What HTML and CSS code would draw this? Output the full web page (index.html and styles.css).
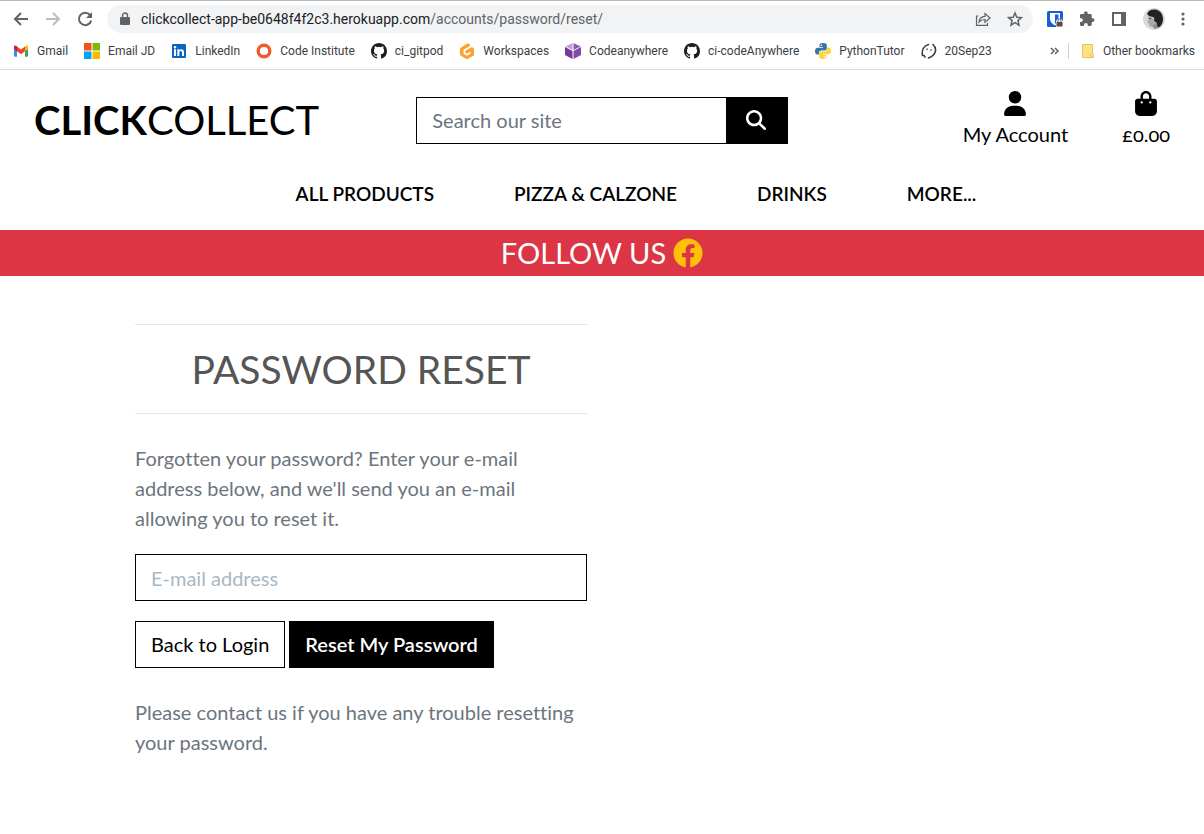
FILE: index.html
```html
<!DOCTYPE html>
<html lang="en">
<head>
<meta charset="utf-8">
<meta name="viewport" content="width=device-width, initial-scale=1">
<title>Password Reset - ClickCollect</title>
<link rel="stylesheet" href="styles.css">
</head>
<body>
<svg class="defs" aria-hidden="true">
  <symbol id="github" viewBox="0 0 16 16"><path fill="#1b1f23" d="M8 0C3.58 0 0 3.58 0 8c0 3.54 2.29 6.53 5.47 7.59.4.07.55-.17.55-.38v-1.49c-2.01.37-2.53-.49-2.69-.94-.09-.23-.48-.94-.82-1.13-.28-.15-.68-.52-.01-.53.63-.01 1.08.58 1.23.82.72 1.21 1.87.87 2.33.66.07-.52.28-.87.51-1.07-1.78-.2-3.64-.89-3.64-3.95 0-.87.31-1.59.82-2.15-.08-.2-.36-1.02.08-2.12 0 0 .67-.21 2.2.82a7.6 7.6 0 0 1 4 0c1.53-1.04 2.2-.82 2.2-.82.44 1.1.16 1.92.08 2.12.51.56.82 1.27.82 2.15 0 3.07-1.87 3.75-3.65 3.95.29.25.54.73.54 1.48v2.19c0 .21.15.46.55.38A8 8 0 0 0 16 8c0-4.42-3.58-8-8-8z"/></symbol>
</svg>

<div class="browser">
  <div class="toolbar">
    <div class="history">
      <button class="tool" aria-label="Back"><svg width="20" height="20" viewBox="0 0 20 20"><path fill="none" stroke="#5f6368" stroke-width="2" d="M17 10H4M10 4l-6 6 6 6"/></svg></button>
      <button class="tool" aria-label="Forward"><svg width="20" height="20" viewBox="0 0 20 20"><path fill="none" stroke="#babcbe" stroke-width="2" d="M3 10h13M10 4l6 6-6 6"/></svg></button>
      <button class="tool" aria-label="Reload"><svg width="20" height="20" viewBox="0 0 20 20"><path fill="none" stroke="#5f6368" stroke-width="2" d="M15 6a6.200 6.200 0 1 0 1.200 5.400"/><path fill="#5f6368" d="M17 3v6h-6z"/></svg></button>
    </div>
    <div class="omnibox">
      <svg width="10" height="14" viewBox="0 0 10 14"><path fill="#5f6368" d="M1 5h8a1 1 0 0 1 1 1v6a1 1 0 0 1-1 1H1a1 1 0 0 1-1-1V6a1 1 0 0 1 1-1z"/><path fill="none" stroke="#5f6368" stroke-width="1.400" d="M2.500 5.500V3.500a2.500 2.500 0 0 1 5 0v2"/></svg>
      <span class="url">clickcollect-app-be0648f4f2c3.herokuapp.com<span class="path">/accounts/password/reset/</span></span>
      <button class="tool" aria-label="Share"><svg width="16" height="16" viewBox="0 0 16 16"><path fill="none" stroke="#5f6368" stroke-width="1.200" d="M3.500 5H1.500v9.400h11V12M4 11c.4-3.400 2.500-5.400 6-5.600V2.600L15 7l-5 4.200V8.500C7.500 8.500 5.500 9.300 4 11z"/></svg></button>
      <button class="tool" aria-label="Bookmark this page"><svg width="16" height="16" viewBox="0 0 16 16"><path fill="none" stroke="#5f6368" stroke-width="1.500" d="M8 2l1.800 4.200 4.600.4-3.500 3 1.100 4.500L8 11.700l-4 2.400 1.100-4.500-3.500-3 4.600-.4z"/></svg></button>
    </div>
    <div class="extensions">
      <button class="tool" aria-label="Password manager"><svg width="16" height="16" viewBox="0 0 16 16"><rect width="16" height="16" rx="1.500" fill="#175ddc"/><path fill="#fff" d="M3 2h10v6c0 3-2.500 5-5 6.500C5.500 13 3 11 3 8z"/><path fill="#175ddc" d="M8 3.500h3.500V8c0 2-1.500 3.500-3.500 4.700z"/><path fill="#fff" d="M9 10.500l1-2 2.500-1 2.500 1 1 2V16H9z"/><rect x="9.500" y="11" width="6" height="4.500" rx=".5" fill="#5a4a44"/><path fill="none" stroke="#5a4a44" d="M11 11V9.700a1.500 1.500 0 0 1 3 0V11"/></svg></button>
      <button class="tool" aria-label="Extensions"><svg width="16" height="16" viewBox="0 0 16 16"><path fill="#5f6368" d="M13.700 7.300h-1V4.500c0-.8-.6-1.400-1.400-1.400H8.700v-1a1.800 1.800 0 0 0-3.600 0v1H2.400C1.600 3.100 1 3.700 1 4.500v2.700h1a1.900 1.900 0 0 1 0 3.800H1v2.600c0 .8.600 1.400 1.400 1.400H5v-1a1.900 1.900 0 0 1 3.800 0v1h2.500c.8 0 1.400-.6 1.400-1.400v-2.700h1a1.800 1.800 0 0 0 0-3.600z"/></svg></button>
      <button class="tool" aria-label="Side panel"><svg width="16" height="16" viewBox="0 0 16 16"><path fill="#5f6368" d="M1 1h14v14H1zM3 3v10h7V3z" fill-rule="evenodd"/></svg></button>
      <button class="tool" aria-label="Profile"><svg width="22" height="22" viewBox="0 0 22 22"><circle cx="11" cy="11" r="11" fill="#d9d9d9"/><path fill="#222" d="M4 6c1-3 4-5 8-4.500 5 .5 8 4.500 8 9.500 0 4-2 8-5 8.500-1.500-1-2-3-1.500-4.500L11 13c0-2 1-3-1-4-2 0-3-1-4-1z"/><path fill="#a9a9a9" d="M5 8c2 .5 4 .500 5 2l1 3 2.500 2 .5 3-3 1-4-.5c-1-.5-.5-1.500-1-2.500L4.500 14 5.500 11z"/><path fill="#444" d="M6 10h2v1H6z"/><path fill="#8b8b8b" d="M10 17l4-1 1 4-4 1z"/></svg></button>
      <button class="tool" aria-label="Menu"><svg width="4" height="16" viewBox="0 0 4 16"><g fill="#5f6368"><circle cx="2" cy="3" r="1.600"/><circle cx="2" cy="8" r="1.600"/><circle cx="2" cy="13" r="1.600"/></g></svg></button>
    </div>
  </div>

  <nav class="bookmarks" aria-label="Bookmarks">
    <a href="#"><svg width="16" height="16" viewBox="0 0 16 16"><path fill="#4285f4" d="M1 3.500l3 2.300v8H2a1 1 0 0 1-1-1z"/><path fill="#34a853" d="M12 5.800l3-2.300v9.300a1 1 0 0 1-1 1h-2z"/><path fill="#fbbc04" d="M12 3.500l1-.7c1-.6 2 .1 2 1.200v2l-3 2.300z"/><path fill="#ea4335" d="M4 8.300V3.600l4 3 4-3v4.700l-4 3z"/><path fill="#c5221f" d="M1 6V4c0-1.100 1-1.800 2-1.200l1 .8v4.700z"/></svg>Gmail</a>
    <a href="#"><svg width="16" height="16" viewBox="0 0 16 16"><path fill="#f25022" d="M0 0h7.500v7.500H0z"/><path fill="#7fba00" d="M8.500 0H16v7.500H8.500z"/><path fill="#00a4ef" d="M0 8.500h7.500V16H0z"/><path fill="#ffb900" d="M8.500 8.500H16V16H8.500z"/></svg>Email JD</a>
    <a href="#"><svg width="16" height="16" viewBox="0 0 16 16"><rect x="1" y="1" width="14" height="14" rx="1" fill="#0a66c2"/><path fill="#fff" d="M3 6.300h2V13H3zM6.300 6.300h2v1c1-1.800 4.700-1.700 4.700 1.700v4h-2V9.500c0-2.200-2.700-2-2.700 0V13h-2z"/><circle cx="4" cy="4.200" r="1.200" fill="#fff"/></svg>LinkedIn</a>
    <a href="#"><svg width="16" height="16" viewBox="0 0 16 16"><circle cx="8" cy="8" r="5.800" fill="none" stroke="#f05a28" stroke-width="3.400"/></svg>Code Institute</a>
    <a href="#"><svg width="16" height="16"><use href="#github"/></svg>ci_gitpod</a>
    <a href="#"><svg width="16" height="16" viewBox="0 0 16 16"><path fill="#ff9f2e" d="M9.500.4a1.700 1.700 0 0 1 .8 3L4.500 6.700v4L8 12.700l3.500-2V8.500l-2.800 1.600a1.600 1.600 0 0 1-1.600-2.800l4.500-2.600C13 3.900 15 4.600 15 6.500v5c0 .7-.3 1-.8 1.300L9 15.700c-.7.400-1.300.4-2 0l-5-2.900c-.6-.3-1-.9-1-1.500V6.100c0-.7.3-1.200 1-1.600L8.300.6c.4-.2.800-.3 1.200-.2z"/></svg>Workspaces</a>
    <a href="#"><svg width="16" height="16" viewBox="0 0 16 16"><path fill="#74389a" d="M0 4l7.500 4v8L0 12z"/><path fill="#8447aa" d="M16 4L8.500 8v8L16 12z"/><path fill="#c49cdb" d="M.5 3.500L7.500 0v7z"/><path fill="#8e5aad" d="M15.500 3.500L8.500 0v7z"/></svg>Codeanywhere</a>
    <a href="#"><svg width="16" height="16"><use href="#github"/></svg>ci-codeAnywhere</a>
    <a href="#"><svg width="16" height="16" viewBox="0 0 16 16"><path fill="#3775a9" d="M8 0C5 0 4.500 1 4.500 2.200V4H8v.7H2.500C.8 4.700 0 6 0 8s.8 3.500 2.200 3.500H4V9.800c0-1.500 1-2.300 2.300-2.300h3.500c1.200 0 2-.8 2-2V2.200C11.800.8 10.500 0 8 0z"/><path fill="#ffd43b" d="M8 16c3 0 3.500-1 3.500-2.200V12H8v-.7h5.500c1.700 0 2.500-1.300 2.500-3.300s-.8-3.500-2.200-3.500H12v1.700c0 1.500-1 2.300-2.300 2.300H6.200c-1.200 0-2 .8-2 2v3.300C4.200 15.200 5.500 16 8 16z"/><circle cx="6.300" cy="2.200" r=".8" fill="#fff"/><circle cx="9.700" cy="13.800" r=".8" fill="#fff"/></svg>PythonTutor</a>
    <a href="#"><svg width="16" height="16" viewBox="0 0 16 16"><path fill="none" stroke="#3a3a3a" stroke-width="1.600" stroke-linecap="round" d="M7.500 1.500C2.500 3 .5 7.500 1.500 12.500M3 12.500l1 1.500M12 1.500c4.500 4 3 11-4.500 13.500"/><path fill="none" stroke="#3a3a3a" stroke-width="1.300" stroke-linecap="round" d="M6 6v.6M10 7v.6"/></svg>20Sep23</a>
    <button class="more" aria-label="More bookmarks"><svg width="10" height="8" viewBox="0 0 10 8"><path fill="none" stroke="#5f6368" stroke-width="1.500" d="M1 1l3 3-3 3M5 1l3 3-3 3"/></svg></button>
    <a class="folder" href="#"><svg width="14" height="16" viewBox="0 0 14 16"><path fill="#fde281" stroke="#e6c35c" d="M1.500 1.500h10v9l1 1v3h-11z"/><path fill="none" stroke="#e6c35c" d="M9.500 14v-2.500l2-1.500"/></svg>Other bookmarks</a>
  </nav>
</div>

<header class="site-header">
  <div class="masthead">
    <a class="logo" href="#"><strong>CLICK</strong>COLLECT</a>
    <form class="search" role="search">
      <input type="text" placeholder="Search our site" aria-label="Search our site">
      <button type="button" aria-label="Search"><svg width="20" height="20" viewBox="0 0 512 512"><path fill="#fff" d="M416 208c0 45.900-14.900 88.300-40 122.700L502.600 457.400c12.500 12.500 12.500 32.800 0 45.300s-32.800 12.500-45.300 0L330.700 376c-34.400 25.200-76.800 40-122.700 40C93.100 416 0 322.900 0 208S93.100 0 208 0S416 93.100 416 208zM208 352a144 144 0 1 0 0-288 144 144 0 1 0 0 288z"/></svg></button>
    </form>
    <div class="account">
      <a href="#"><svg width="22" height="25" viewBox="0 0 448 512"><path d="M224 256A128 128 0 1 0 224 0a128 128 0 1 0 0 256zm-45.700 48C79.800 304 0 383.800 0 482.300C0 498.700 13.300 512 29.700 512H418.300c16.400 0 29.700-13.300 29.700-29.700C448 383.800 368.200 304 269.700 304H178.300z"/></svg>My Account</a>
      <a href="#"><svg width="22" height="25" viewBox="0 0 448 512"><path d="M160 112c0-35.300 28.700-64 64-64s64 28.700 64 64v48H160V112zm-48 48H48c-26.500 0-48 21.500-48 48V416c0 53 43 96 96 96H352c53 0 96-43 96-96V208c0-26.500-21.500-48-48-48H336V112C336 50.100 285.900 0 224 0S112 50.100 112 112v48zm24 48a24 24 0 1 1 0 48 24 24 0 1 1 0-48zm152 24a24 24 0 1 1 48 0 24 24 0 1 1-48 0z"/></svg>£0.00</a>
    </div>
  </div>
  <nav class="main-nav" aria-label="Main">
    <a href="#">ALL PRODUCTS</a>
    <a href="#">PIZZA &amp; CALZONE</a>
    <a href="#">DRINKS</a>
    <a href="#">MORE...</a>
  </nav>
</header>

<div class="banner">
  <span>FOLLOW US</span>
  <a href="#" aria-label="Facebook"><svg width="30" height="30" viewBox="0 0 512 512"><path fill="#ffc107" d="M504 256C504 119 393 8 256 8S8 119 8 256c0 123.780 90.690 226.380 209.250 245V327.690h-63V256h63v-54.640c0-62.150 37-96.480 93.670-96.480 27.140 0 55.520 4.840 55.520 4.840v61h-31.280c-30.800 0-40.410 19.120-40.410 38.730V256h68.780l-11 71.690h-57.780V501C413.310 482.380 504 379.780 504 256z"/></svg></a>
</div>

<main class="content">
  <section class="panel">
    <h1>PASSWORD RESET</h1>
    <p>Forgotten your password? Enter your e-mail address below, and we'll send you an e-mail allowing you to reset it.</p>
    <form class="reset">
      <input type="email" placeholder="E-mail address" aria-label="E-mail address">
      <div class="actions">
        <a class="btn" href="#">Back to Login</a>
        <button class="btn primary" type="button">Reset My Password</button>
      </div>
    </form>
    <p>Please contact us if you have any trouble resetting your password.</p>
  </section>
</main>
</body>
</html>
```
FILE: styles.css
```css
* { box-sizing: border-box; }

body {
  margin: 0;
  background: #fff;
  color: #000;
  font: 400 20px/30px Lato, sans-serif;
  font-variant-ligatures: none;
}

a { color: inherit; text-decoration: none; }
svg { display: block; flex: none; }
button, input { font: inherit; border-radius: 0; }
.defs { position: absolute; width: 0; height: 0; }

/* Browser chrome */
.browser {
  border-top: 1px solid #b9b9bb;
  border-bottom: 1px solid #dadce0;
}

.toolbar {
  display: flex;
  align-items: center;
  gap: 12px;
  padding: 4px 19px 0 11px;
}

.tool, .more {
  display: flex;
  padding: 0;
  border: 0;
  background: none;
}

.history { display: flex; gap: 12px; }

.omnibox {
  display: flex;
  flex: 1;
  align-items: center;
  gap: 16px;
  min-width: 0;
  height: 28px;
  padding: 0 10px 0 13px;
  border-radius: 14px;
  background: #f1f3f4;
}

.omnibox > svg { margin-right: -5px; }

.url {
  flex: 1;
  overflow: hidden;
  color: #202124;
  font: 14px/20px Roboto, sans-serif;
  white-space: nowrap;
}

.path { color: #5f6368; }

.extensions {
  display: flex;
  align-items: center;
  gap: 16px;
  padding-left: 2px;
}

.bookmarks {
  display: flex;
  align-items: center;
  gap: 16px;
  height: 36px;
  padding: 0 9px 0 13px;
  color: #3c4043;
  font: 12px/16px Roboto, sans-serif;
  white-space: nowrap;
}

.bookmarks a { display: flex; align-items: center; gap: 8px; }
.bookmarks .more { margin-left: auto; margin-right: -8px; }
.bookmarks .folder { padding-left: 12px; border-left: 1px solid #cfd1d4; }

/* Site header */
.masthead {
  display: grid;
  grid-template-columns: repeat(3, minmax(0, 1fr));
  align-items: center;
  padding-top: 21px;
}

.logo {
  padding-left: 34px;
  font-size: 40px;
  line-height: 48px;
}

.logo strong { font-weight: 700; }

.search {
  display: flex;
  margin: 0 15px;
  border: 1px solid #000;
}

.search input {
  flex: 1;
  min-width: 0;
  height: 45px;
  padding: 0 15px;
  border: 0;
  background: #fff;
}

.search input::placeholder { color: #6c757d; opacity: 1; }

.search button {
  display: flex;
  align-items: center;
  justify-content: center;
  width: 61px;
  padding: 0;
  border: 0;
  background: #000;
}

.account {
  display: flex;
  justify-content: flex-end;
  gap: 54px;
  padding-right: 34px;
  font-variant-numeric: oldstyle-nums;
}

.account a {
  display: flex;
  flex-direction: column;
  align-items: center;
  gap: 3px;
}

.main-nav {
  display: flex;
  justify-content: center;
  gap: 80px;
  padding: 30px 0 21px 68px;
  font-size: 19px;
  font-weight: 600;
}

.banner {
  display: flex;
  align-items: center;
  justify-content: center;
  gap: 7px;
  height: 46px;
  background: #dc3545;
  color: #fff;
  font-size: 29px;
}

/* Password reset */
.content {
  display: grid;
  grid-template-columns: repeat(2, minmax(0, 1fr));
  column-gap: 30px;
  max-width: 960px;
  margin: 48px auto 0;
  padding: 0 13px;
}

.panel { color: #6c757d; }

.panel h1 {
  margin: 0 0 29px;
  padding: 20px 0;
  border: solid #e5e5e5;
  border-width: 1px 0;
  color: #555;
  font-size: 39px;
  font-weight: 400;
  line-height: 48px;
  text-align: center;
}

.panel p { margin: 0; }

.reset {
  display: grid;
  gap: 20px;
  margin: 21px 0 29px;
}

.reset input {
  width: 100%;
  height: 47px;
  padding: 0 15px;
  border: 1px solid #000;
}

.reset input::placeholder { color: #aab7c4; opacity: 1; }

.actions { display: flex; gap: 4px; }

.btn {
  height: 47px;
  padding: 0 15px;
  border: 1px solid #000;
  background: #fff;
  color: #000;
  line-height: 45px;
}

.primary {
  background: #000;
  color: #fff;
  font-weight: 600;
}
```
